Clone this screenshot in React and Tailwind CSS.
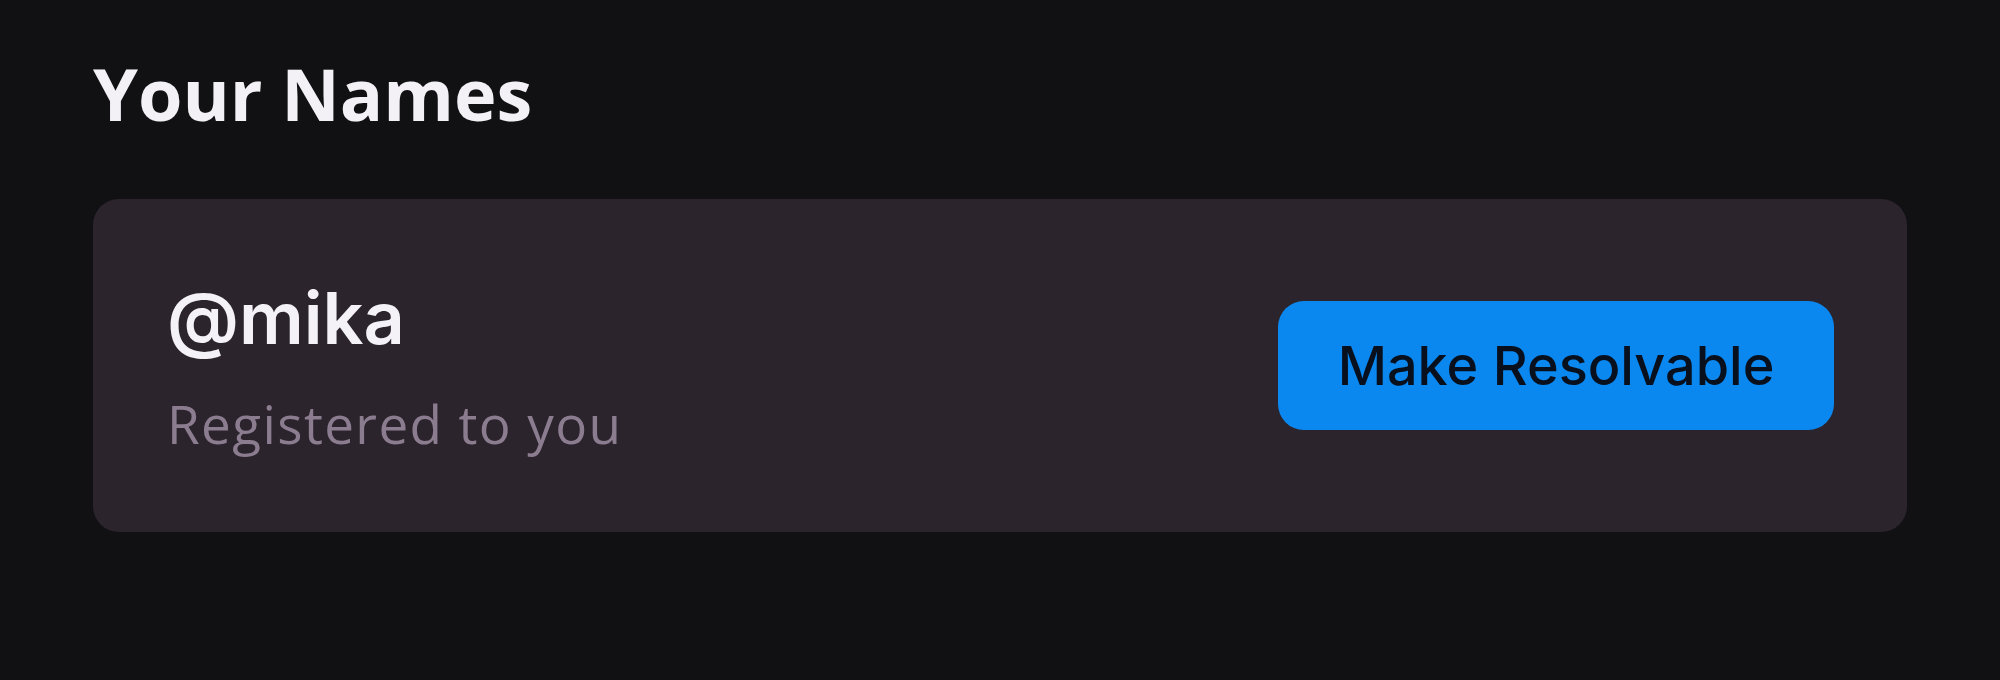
export default function App() {
  return (
    <div className="min-h-[680px] w-full bg-[#111114] px-[93px] pt-[57px]">
      <h1 className="font-['Open_Sans',sans-serif] text-[72px] font-bold leading-none text-[#f3f1f6]">
        Your Names
      </h1>

      <div className="mt-[70px] flex h-[333px] items-center justify-between rounded-[26px] bg-[#2b242d] pl-[74px] pr-[73px]">
        <div className="flex flex-col">
          <span className="font-['Inter',sans-serif] text-[72px] font-semibold leading-none text-[#f4f2f7]">
            @mika
          </span>
          <span className="mt-[43px] font-['Open_Sans',sans-serif] text-[53px] leading-none tracking-[1.4px] text-[#8b7d8f]">
            Registered to you
          </span>
        </div>

        <button
          type="button"
          className="flex h-[129px] w-[556px] items-center justify-center rounded-[26px] bg-[#0a88f0] font-['Inter',sans-serif] text-[54px] font-medium text-[#08101e]"
        >
          Make Resolvable
        </button>
      </div>
    </div>
  );
}
